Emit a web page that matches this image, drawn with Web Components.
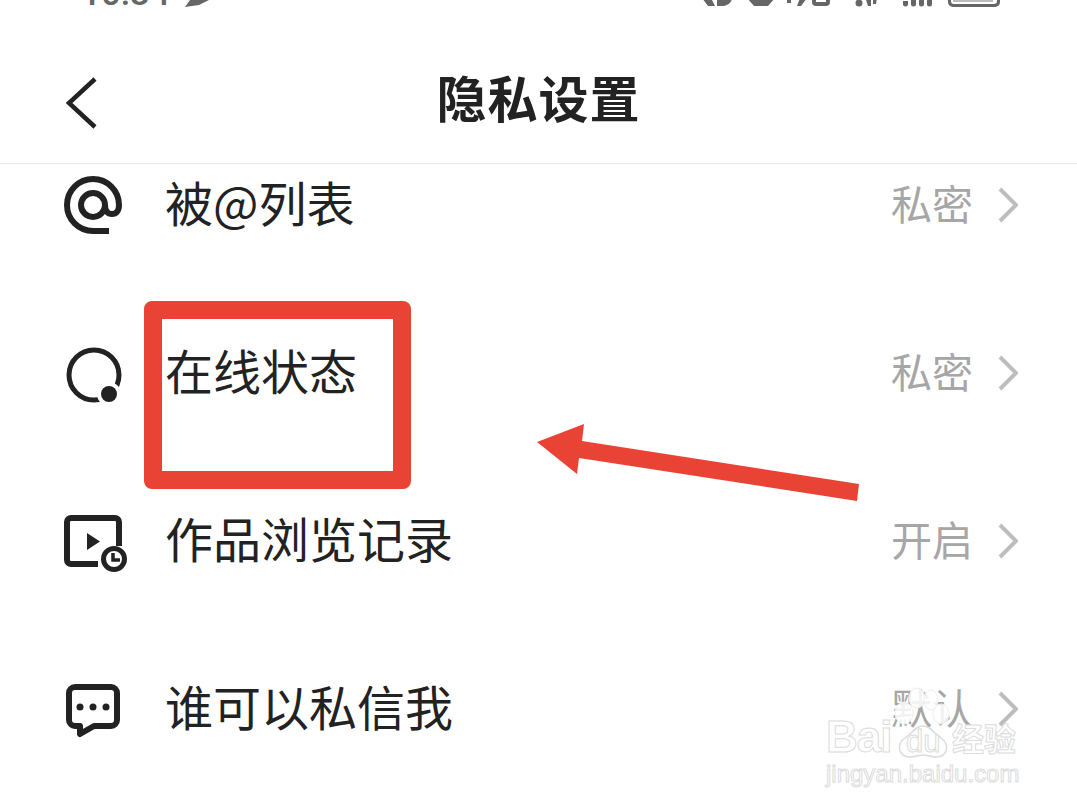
<!DOCTYPE html>
<html lang="zh">
<head>
<meta charset="utf-8">
<style>
  html, body { margin: 0; height: 100%; background: #fff; }
  body { font-family: "Noto Sans CJK SC", "Noto Sans", sans-serif; overflow: hidden; }
  privacy-page { width: 1077px; height: 807px; }
</style>
</head>
<body>
<privacy-page>
  <status-bar slot="status"></status-bar>
  <nav-bar slot="nav" title-text="隐私设置"></nav-bar>
  <setting-row label="被@列表" value="私密">
    <svg slot="icon" width="58" height="58" viewBox="0 0 58 58" fill="none" stroke="#222" stroke-width="6">
      <path d="M45 55 H29 A26 26 0 1 1 55 29 C55 35 52 38 48 38 C44 38 41 35 41 29"/>
      <circle cx="29" cy="29" r="12"/>
    </svg>
  </setting-row>
  <setting-row label="在线状态" value="私密">
    <svg slot="icon" width="58" height="58" viewBox="0 0 58 58" fill="none" style="transform:translateY(2px)">
      <circle cx="30" cy="29" r="25" stroke="#222" stroke-width="5"/>
      <circle cx="45" cy="48" r="12" fill="#fff"/>
      <circle cx="45" cy="48" r="8" fill="#222"/>
    </svg>
  </setting-row>
  <setting-row label="作品浏览记录" value="开启">
    <svg slot="icon" width="64" height="64" viewBox="0 0 64 64" fill="none" stroke="#222" stroke-width="6" style="margin-right:-6px;transform:translateY(6px)">
      <path d="M34 49 H7 A4 4 0 0 1 3 45 V7 A4 4 0 0 1 7 3 H51 A4 4 0 0 1 55 7 V31"/>
      <path d="M23 18 L36 26.500 L23 35 Z" fill="#222" stroke="none"/>
      <circle cx="50" cy="44" r="10.500" stroke-width="5"/>
      <path d="M49 38 V45 H56" stroke-width="3.500"/>
    </svg>
  </setting-row>
  <setting-row label="谁可以私信我" value="默认">
    <svg slot="icon" width="58" height="58" viewBox="0 0 58 58" fill="none" stroke="#222" stroke-width="6" style="transform:translate(2px,4px)">
      <path d="M9 3 H45 A6 6 0 0 1 51 9 V36 A6 6 0 0 1 45 42 H28 L14 50 V42 H9 A6 6 0 0 1 3 36 V9 A6 6 0 0 1 9 3 Z" stroke-linejoin="round"/>
      <g fill="#222" stroke="none">
        <circle cx="14" cy="23" r="3.500"/><circle cx="27" cy="23" r="3.500"/><circle cx="40" cy="23" r="3.500"/>
      </g>
    </svg>
  </setting-row>
  <red-annotation slot="overlay"></red-annotation>
  <baidu-mark slot="overlay"></baidu-mark>
</privacy-page>

<script>
class PrivacyPage extends HTMLElement {
  constructor() {
    super();
    this.shadow = this.attachShadow({ mode: 'open' });
  }
  connectedCallback() {
    this.shadow.innerHTML = `
    <style>
      :host { display: flex; flex-direction: column; position: relative; overflow: hidden; background: #fff; }
      .list { flex: 1; min-height: 0; overflow: hidden; }
      .scrolled { margin-top: -43px; display: flex; flex-direction: column; }
    </style>
    <slot name="status"></slot>
    <slot name="nav"></slot>
    <div class="list"><div class="scrolled"><slot></slot></div></div>
    <slot name="overlay"></slot>
    `;
  }
}

class StatusBar extends HTMLElement {
  constructor() {
    super();
    this.shadow = this.attachShadow({ mode: 'open' });
  }
  connectedCallback() {
    this.shadow.innerHTML = `
    <style>
      :host { display: block; height: 8px; overflow: hidden; position: relative; }
      .bar { position: absolute; left: 81px; right: 77px; bottom: 0; height: 50px; display: flex; align-items: flex-end; color: #666; }
      .time { font: 500 35px/50px "Roboto", sans-serif; margin-bottom: -11px; width: 104px; }
      svg { display: block; fill: #666; }
      .icons { margin-left: auto; }
    </style>
    <div class="bar">
      <span class="time">10:34</span>
      <svg width="24" height="30" viewBox="0 0 24 30"><path d="M0 29 L5 22 H24 L14 27 Z"/></svg>
      <svg class="icons" width="298" height="30" viewBox="0 0 298 30">
        <path d="M0 20 h9 l4 8 h-7 Z M15 20 h15 a12 9 0 0 1 -8 8 h-7 Z"/>
        <path d="M45 20 H73 L66 28 H52 Z"/>
        <path d="M85 22 h4 v3 h-4 Z M98 20 h7 l-6 8 h-4 Z"/>
        <rect x="112" y="20" width="14" height="6" rx="2" fill="none" stroke="#666" stroke-width="4"/>
        <circle cx="157" cy="25" r="3.500"/><path d="M164 22 h5 v6 h-3 Z M171 20 h4 l-1 6 h-3 Z"/>
        <path d="M201 23 h5 v3 a2.500 2.500 0 0 1 -5 0 Z M209 22 h5 v4 a2.500 2.500 0 0 1 -5 0 Z M217 20 h5 v6 a2.500 2.500 0 0 1 -5 0 Z M225 20 h5 v6 a2.500 2.500 0 0 1 -5 0 Z"/>
        <path d="M246 20 h3 v3 a3 3 0 0 0 3 3 h40 a3 3 0 0 0 3 -3 v-3 h3 v4 a5 5 0 0 1 -5 5 h-42 a5 5 0 0 1 -5 -5 Z"/>
        <rect x="251" y="20" width="40" height="4" fill="#bbb"/>
      </svg>
    </div>
    `;
  }
}

class NavBar extends HTMLElement {
  constructor() {
    super();
    this.shadow = this.attachShadow({ mode: 'open' });
  }
  connectedCallback() {
    this.shadow.innerHTML = `
    <style>
      :host { display: flex; align-items: center; justify-content: center; position: relative; height: 155px; border-bottom: 1px solid #e8e8e8; background: #fff; z-index: 1; }
      h1 { margin: 0; font-size: 50px; font-weight: 700; letter-spacing: 1px; color: #222; transform: translateY(10px); }
      svg { position: absolute; left: 66px; top: 69px; }
    </style>
    <svg width="34" height="54" viewBox="0 0 34 54" fill="none" stroke="#222" stroke-width="4.500">
      <path d="M29 2 L3 26 L29 50"/>
    </svg>
    <h1>${this.getAttribute('title-text')}</h1>
    `;
  }
}

class SettingRow extends HTMLElement {
  constructor() {
    super();
    this.shadow = this.attachShadow({ mode: 'open' });
  }
  connectedCallback() {
    this.shadow.innerHTML = `
    <style>
      :host { display: flex; align-items: center; height: 168px; padding: 0 59px 0 64px; }
      .icon { width: 58px; margin-right: 43px; display: flex; align-items: center; }
      .icon ::slotted(svg) { display: block; flex: none; }
      .label { font-size: 48px; line-height: 60px; color: #222; flex: 1; padding-bottom: 8px; }
      .value { font-size: 41px; line-height: 60px; color: #a6a6a6; padding-bottom: 6px; }
      .arrow { margin-left: 25px; display: block; }
    </style>
    <span class="icon"><slot name="icon"></slot></span>
    <span class="label">${this.getAttribute('label')}</span>
    <span class="value">${this.getAttribute('value')}</span>
    <svg class="arrow" width="20" height="36" viewBox="0 0 20 36" fill="none" stroke="#bdbdbd" stroke-width="4"><path d="M2 2 L18 18 L2 34"/></svg>
    `;
  }
}

class RedAnnotation extends HTMLElement {
  constructor() {
    super();
    this.shadow = this.attachShadow({ mode: 'open' });
  }
  connectedCallback() {
    this.shadow.innerHTML = `
    <style>
      :host { display: contents; }
      .box { position: absolute; left: 144px; top: 301px; width: 267px; height: 188px; box-sizing: border-box; border: 18px solid #e94335; border-radius: 8px; }
      svg { position: absolute; left: 530px; top: 420px; }
    </style>
    <div class="box"></div>
    <svg width="335" height="85" viewBox="530 420 335 85"><polygon fill="#e94335" points="537,442 584,424 582,441 859,484 857,501 579,458 577,474"/></svg>
    `;
  }
}

class BaiduMark extends HTMLElement {
  constructor() {
    super();
    this.shadow = this.attachShadow({ mode: 'open' });
  }
  connectedCallback() {
    this.shadow.innerHTML = `
    <style>
      :host { position: absolute; left: 826px; top: 716px; width: 196px; color: #fff; font-family: "Liberation Sans", sans-serif; }
      .top { display: flex; align-items: center; height: 42px; font-size: 44px; font-weight: 700; -webkit-text-stroke: 1px #dcdcdc; }
      .bai { width: 68px; letter-spacing: -1px; }
      .paw { position: relative; width: 58px; height: 42px; flex: none; }
      .paw svg { position: absolute; left: 0; top: -30px; }
      .paw span { position: absolute; left: 12px; top: 10px; font-size: 31px; line-height: 32px; font-weight: 400; -webkit-text-stroke: 1px #dcdcdc; }
      .cn { font-family: "Noto Sans CJK SC", sans-serif; font-size: 32px; line-height: 42px; }
      .url { font-size: 24px; line-height: 28px; margin-top: 2px; -webkit-text-stroke: 1px #dcdcdc; white-space: nowrap; }
    </style>
    <div class="top">
      <span class="bai">Bai</span>
      <span class="paw">
        <svg width="58" height="72" viewBox="0 0 58 72" fill="#fff" stroke="#eeeeee" stroke-width="1">
          <ellipse cx="10" cy="27" rx="9" ry="11" fill-opacity=".85"/>
          <ellipse cx="23" cy="12" rx="8" ry="10" fill-opacity=".85"/>
          <ellipse cx="37" cy="14" rx="7" ry="10" fill-opacity=".85"/>
          <ellipse cx="47" cy="28" rx="8" ry="10" fill-opacity=".85"/>
          <path stroke="#dcdcdc" stroke-width="1.500" d="M29 40 C37 40 39 47 47 52 C56 58 54 71 42 71 C36 71 33 69 29 69 C25 69 22 71 16 71 C4 71 2 58 11 52 C19 47 21 40 29 40 Z"/>
        </svg>
        <span>du</span>
      </span>
      <span class="cn">经验</span>
    </div>
    <div class="url">jingyan.baidu.com</div>
    `;
  }
}

customElements.define('privacy-page', PrivacyPage);
customElements.define('status-bar', StatusBar);
customElements.define('nav-bar', NavBar);
customElements.define('setting-row', SettingRow);
customElements.define('red-annotation', RedAnnotation);
customElements.define('baidu-mark', BaiduMark);
</script>
</body>
</html>
